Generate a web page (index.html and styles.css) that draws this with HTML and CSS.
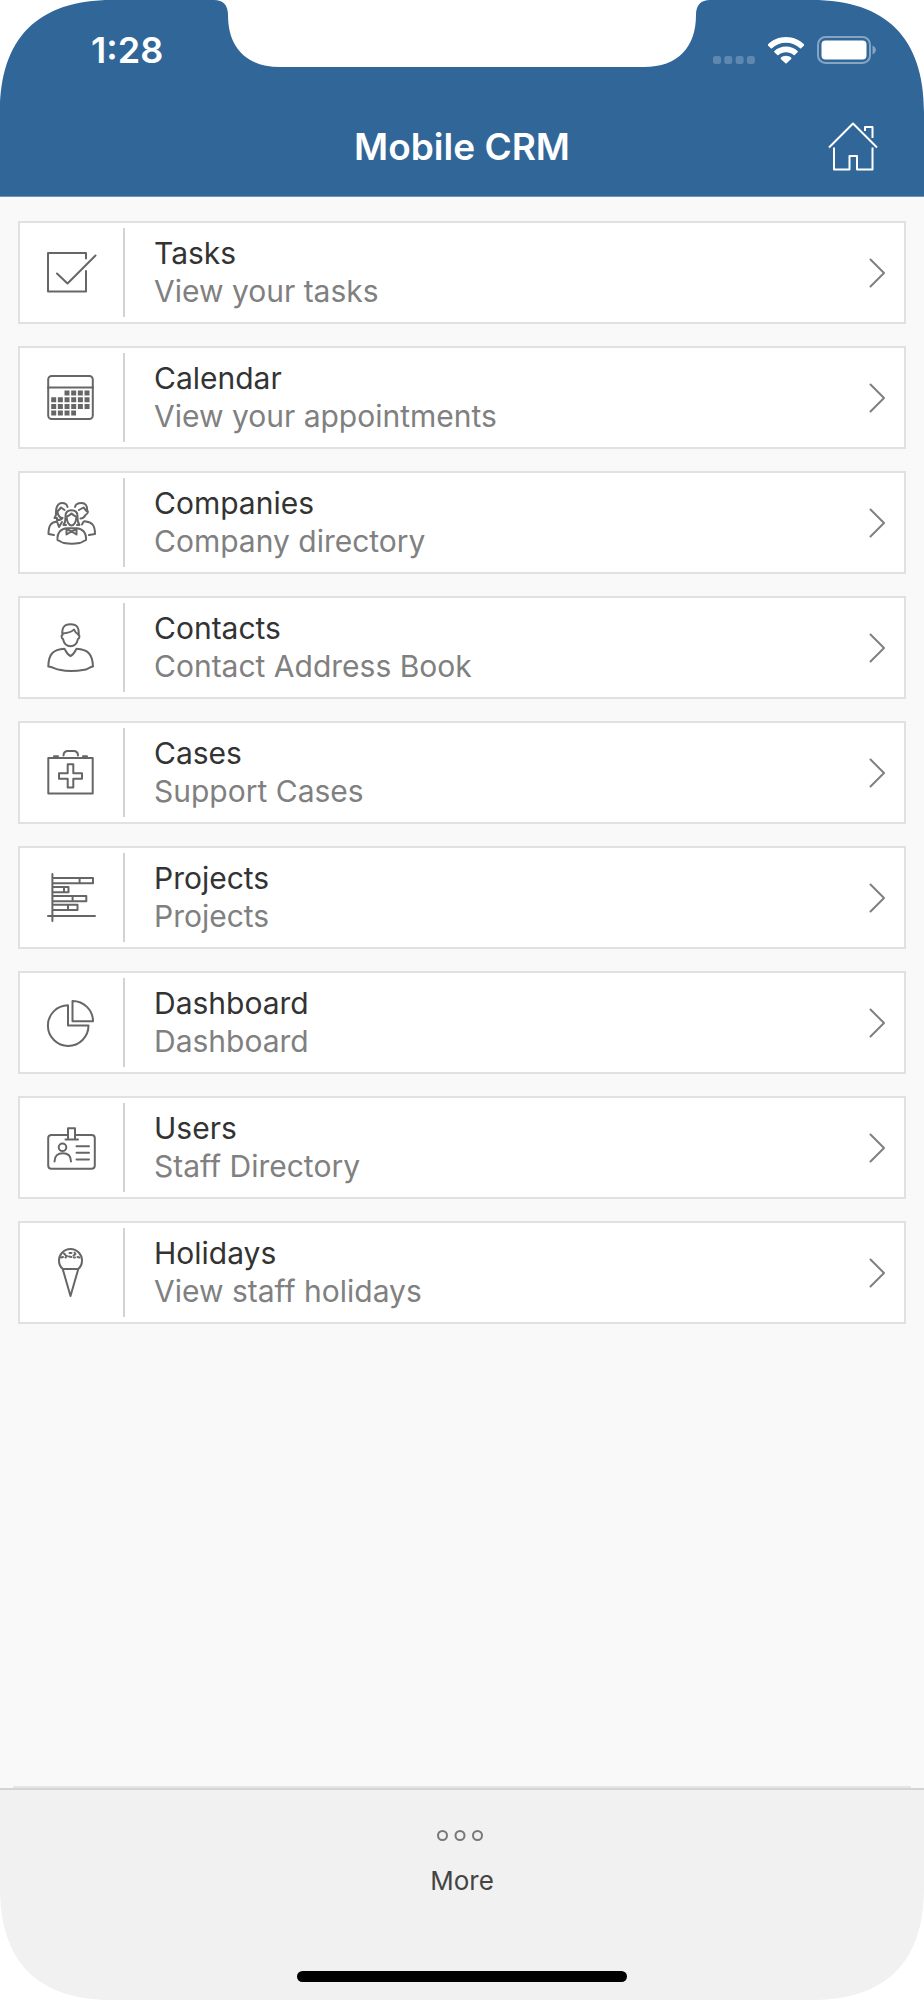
FILE: index.html
```html
<!DOCTYPE html>
<html lang="en">
<head>
<meta charset="utf-8">
<meta name="viewport" content="width=device-width, initial-scale=1">
<title>Mobile CRM</title>
<link rel="stylesheet" href="styles.css">
</head>
<body>
<div class="screen">
  <header class="header">
    <div class="status">
      <div class="status-left"><time class="clock">1:28</time></div>
      <svg class="notch" viewBox="0 0 496 67" width="496" height="67" aria-hidden="true"><path d="M0 0C9 0 14 5 14 15C14 47 32 67 66 67H430C464 67 482 47 482 15C482 5 487 0 496 0Z"/></svg>
      <div class="status-right">
        <svg class="signal" viewBox="0 0 42 8" width="42" height="8" aria-hidden="true"><rect width="8" height="8" rx="2.500"/><rect x="11.300" width="8" height="8" rx="2.500"/><rect x="22.600" width="8" height="8" rx="2.500"/><rect x="33.900" width="8" height="8" rx="2.500"/></svg>
        <svg class="wifi" viewBox="0 0 36 27" width="36" height="27" aria-hidden="true"><path d="M18 0C25 0 31.500 2.800 36 7.300Q36.500 8 36 8.600L33.200 11.300Q32.600 11.700 32 11.200C28.300 7.700 23.500 5.700 18 5.700S7.700 7.700 4 11.200Q3.400 11.700 2.800 11.300L0 8.600Q-.5 8 0 7.300C4.500 2.800 11 0 18 0Z"/><path d="M18 9.500C22.500 9.500 26.500 11.200 29.600 14Q30.100 14.600 29.600 15.200L26.700 18Q26.100 18.500 25.500 18C23.400 16.200 20.900 15.200 18 15.200S12.600 16.200 10.500 18Q9.900 18.500 9.300 18L6.400 15.200Q5.900 14.600 6.400 14C9.500 11.200 13.500 9.500 18 9.500Z"/><path d="M18 18.800C20 18.800 21.800 19.500 23.200 20.700Q23.700 21.300 23.200 21.900L18.600 26.300Q18 26.800 17.400 26.300L12.800 21.900Q12.300 21.300 12.800 20.700C14.200 19.500 16 18.800 18 18.800Z"/></svg>
        <svg class="battery" viewBox="0 0 60 28" width="60" height="28" aria-hidden="true"><rect class="battery-case" x="1" y="1" width="52" height="26" rx="7.500"/><rect x="4.500" y="4.500" width="45" height="19" rx="4"/><path class="battery-tip" d="M55.500 9.500C60 11.500 60 16.500 55.500 18.500Z"/></svg>
      </div>
    </div>
    <div class="titlebar">
      <h1 class="title">Mobile CRM</h1>
      <button class="home" type="button" aria-label="Home">
        <svg viewBox="0 0 50 50" width="50" height="50" aria-hidden="true"><path d="M1 25.500L25 1.500L49 25.500M6 25.500V47.500H21.500V34H29V47.500H44.500V25.500M37 9V5H44.500V16"/></svg>
      </button>
    </div>
  </header>

  <main class="content">
    <ul class="menu">
      <li><a class="card" href="#tasks">
        <span class="card-icon"><svg viewBox="0 0 49 49"><path d="M39 10.500V5H1V43.500H39V23M10 25.500L20.500 35.500L48.500 7.500"/></svg></span>
        <span class="card-text"><span class="card-title">Tasks</span><span class="card-sub">View your tasks</span></span>
        <svg class="arrow" viewBox="0 0 16 30"><path d="M1.500 1.500L15 15L1.500 28.500"/></svg>
      </a></li>
      <li><a class="card" href="#calendar">
        <span class="card-icon"><svg viewBox="0 0 49 49"><rect x="1.200" y="3" width="44.600" height="43" rx="3.500"/><path d="M1 14.400H46"/><path class="days" d="M17.500 20H43.500M4.200 26.700H43.500M4.200 33.400H43.500M4.200 40H29"/></svg></span>
        <span class="card-text"><span class="card-title">Calendar</span><span class="card-sub">View your appointments</span></span>
        <svg class="arrow" viewBox="0 0 16 30"><path d="M1.500 1.500L15 15L1.500 28.500"/></svg>
      </a></li>
      <li><a class="card" href="#companies">
        <span class="card-icon"><svg viewBox="0 0 49 49"><path d="M10.500 42C10 34 14.500 30.500 20 30.200H29.500C35 30.500 39.500 34 39 42C36 43 35.500 44.500 32.500 45Q24.800 46.500 17 45C14 44.500 13.500 43 10.500 42Z"/><path d="M19 27H16.500C19 24 18.500 21 18.500 18C18.500 14 21 12.300 24.500 12.300S30.500 14 30.500 18C30.500 21 30 24 32.500 27H30"/><path d="M20 18.500C22 18 23 17 24.500 15.500C26 17 27 18 29 18.500M19.800 20C20 24 22 27.500 24.500 27.500S29 24 29.200 20"/><path d="M19.500 31V36.500L24.500 33.500L29.500 36.500V31L24.500 33.500Z"/><path d="M9 17C8.500 9 11 5 15 5C18.500 5 20 6.500 20.500 9M9 17L7.500 20H10V22C13 22 15 21 15.500 20M10 14L14 9.500L17.500 12M10.500 14C11 17 12.500 19.500 15 20"/><path d="M28 9C28.500 6.500 31 5 34.500 5C38.500 5 40.500 8 40 12C42 14 40 16 38.500 17C37.500 19 36 20.500 33.500 20.500M32 12L36.500 9.500L39.500 13"/><path d="M7 37L1.500 36C1.500 27 4 24.500 10 23.500L12 29L15 24M42 37L48 36C48 27 45 24.500 39 23.500C37 22.500 36 24 35 26.500"/></svg></span>
        <span class="card-text"><span class="card-title">Companies</span><span class="card-sub">Company directory</span></span>
        <svg class="arrow" viewBox="0 0 16 30"><path d="M1.500 1.500L15 15L1.500 28.500"/></svg>
      </a></li>
      <li><a class="card" href="#contacts">
        <span class="card-icon"><svg viewBox="0 0 49 49"><path d="M15.500 12C14.500 5 17 1.200 23.500 1.200S32.500 5 31.500 12C33 12 32.500 15.500 31 16C30 20.500 27 23.300 23.500 23.300S17 20.500 16 16C14.500 15.500 14 12 15.500 12Z"/><path d="M16 10.500C21 10 25 9 27 6.500C28 9 29.500 10.500 31.500 11.500"/><path d="M17.500 25.800C19 28 20 32 23.500 33C27 32 28 28 29.500 25.800C41 26.500 45.500 31 46 43.500C43 43.800 40 46.500 37.500 46.800Q23.500 49.300 12.500 46.800C9 46.500 6 44 1.300 43.500C1.500 31 6 26.500 17.500 25.800Z"/></svg></span>
        <span class="card-text"><span class="card-title">Contacts</span><span class="card-sub">Contact Address Book</span></span>
        <svg class="arrow" viewBox="0 0 16 30"><path d="M1.500 1.500L15 15L1.500 28.500"/></svg>
      </a></li>
      <li><a class="card" href="#cases">
        <span class="card-icon"><svg viewBox="0 0 49 49"><path d="M1.300 10H45.700V45.500H1.300ZM16.500 7.500C16.500 4.500 18.500 3 21 3H26.500C29 3 31 4.500 31 7.500M7 8.300H11M36 8.300H40M20.700 16.300H26.300V25.200H35V30.800H26.300V39.500H20.700V30.800H12V25.200H20.700Z"/></svg></span>
        <span class="card-text"><span class="card-title">Cases</span><span class="card-sub">Support Cases</span></span>
        <svg class="arrow" viewBox="0 0 16 30"><path d="M1.500 1.500L15 15L1.500 28.500"/></svg>
      </a></li>
      <li><a class="card" href="#projects">
        <span class="card-icon"><svg viewBox="0 0 49 49"><path d="M5.400 1V48M1 43H48M6 5H46V10.300H6M32.600 5V10.300M6 14H21.500V19.300H6M17 14V19.300M6 22.900H39.300V28.200H6M25.600 22.900V28.200M6 31.800H30.500V37.100H6M21 31.800V37.100"/></svg></span>
        <span class="card-text"><span class="card-title">Projects</span><span class="card-sub">Projects</span></span>
        <svg class="arrow" viewBox="0 0 16 30"><path d="M1.500 1.500L15 15L1.500 28.500"/></svg>
      </a></li>
      <li><a class="card" href="#dashboard">
        <span class="card-icon"><svg viewBox="0 0 49 49"><path d="M21 7.300V27.600H41.500A20.300 20.300 0 1 1 21 7.300ZM25.500 3V23.300H46A20.400 20.400 0 0 0 25.500 3Z"/></svg></span>
        <span class="card-text"><span class="card-title">Dashboard</span><span class="card-sub">Dashboard</span></span>
        <svg class="arrow" viewBox="0 0 16 30"><path d="M1.500 1.500L15 15L1.500 28.500"/></svg>
      </a></li>
      <li><a class="card" href="#users">
        <span class="card-icon"><svg viewBox="0 0 49 49"><path d="M21 12H4.500Q1.200 12 1.200 15V42.500Q1.200 45.700 4.500 45.700H44.500Q47.800 45.700 47.800 42.500V15Q47.800 12 44.500 12H28M21 16.300V5.300H28V16.300M18.500 16.500H31M7.500 38.500C7.500 33 11 30.300 15.800 30.300S24 33 24 38.500M29.500 23.200H42M29.500 29.800H42M29.500 36.500H42"/><circle cx="15.500" cy="24.300" r="3.800"/></svg></span>
        <span class="card-text"><span class="card-title">Users</span><span class="card-sub">Staff Directory</span></span>
        <svg class="arrow" viewBox="0 0 16 30"><path d="M1.500 1.500L15 15L1.500 28.500"/></svg>
      </a></li>
      <li><a class="card" href="#holidays">
        <span class="card-icon"><svg viewBox="0 0 49 49"><path d="M15.700 21A11.500 11.500 0 1 1 31.300 21ZM15.700 21L23.500 48L31.300 21"/><path class="sprinkles" d="M14 9.500L16 9M17 5.500L18.500 7M18.500 9.500L20 8M22.500 5H24.500M22 8.500L24.500 9M27.500 4.500L28.500 6M26.500 7.500L28 6.500M30.500 9L32.500 9.500M27 9.500H28"/></svg></span>
        <span class="card-text"><span class="card-title">Holidays</span><span class="card-sub">View staff holidays</span></span>
        <svg class="arrow" viewBox="0 0 16 30"><path d="M1.500 1.500L15 15L1.500 28.500"/></svg>
      </a></li>
    </ul>
    <hr class="content-end">
  </main>

  <footer class="footer">
    <button class="more" type="button">
      <svg viewBox="0 0 50 11" width="50" height="11" aria-hidden="true"><circle cx="5.500" cy="5.500" r="4.500"/><circle cx="23" cy="5.500" r="4.500"/><circle cx="40.500" cy="5.500" r="4.500"/></svg>
      <span>More</span>
    </button>
    <div class="home-indicator"></div>
  </footer>

  <svg class="corner top-left" viewBox="0 0 112 112" aria-hidden="true"><path d="M0 0V112C0 38 38 0 112 0Z"/></svg>
  <svg class="corner top-right" viewBox="0 0 112 112" aria-hidden="true"><path d="M112 0V112C112 38 74 0 0 0Z"/></svg>
  <svg class="corner bottom-left" viewBox="0 0 112 112" aria-hidden="true"><path d="M0 112V0C0 74 38 112 112 112Z"/></svg>
  <svg class="corner bottom-right" viewBox="0 0 112 112" aria-hidden="true"><path d="M112 112V0C112 74 74 112 0 112Z"/></svg>
</div>
</body>
</html>
```
FILE: styles.css
```css
*, *::before, *::after {
  box-sizing: border-box;
}

body {
  margin: 0;
  background: #fff;
  font-family: Inter, "Liberation Sans", sans-serif;
}

button {
  padding: 0;
  border: 0;
  background: none;
  font: inherit;
  color: inherit;
}

.screen {
  position: relative;
  display: flex;
  flex-direction: column;
  min-height: 100vh;
  background: #f9f9f9;
}

/* Header */
.header {
  background: #316698;
  border-bottom: 1px solid #6d93b7;
  color: #fff;
}

.status {
  display: grid;
  grid-template-columns: 1fr auto 1fr;
  height: 100px;
}

.status-left,
.status-right {
  display: flex;
  align-items: center;
  height: 100px;
}

.status-left {
  padding-left: 91px;
}

.clock {
  font-size: 36px;
  font-weight: 600;
  line-height: 40px;
}

.notch {
  display: block;
  fill: #fff;
}

.status-right {
  justify-content: flex-end;
  gap: 13px;
  padding-right: 47px;
  fill: #fff;
}

.signal {
  margin-top: 19px;
  fill: #5e88b0;
}

.battery-case {
  fill: none;
  stroke: #86a5c3;
  stroke-width: 2;
}

.battery-tip {
  fill: #86a5c3;
}

.titlebar {
  display: grid;
  grid-template-columns: 1fr auto 1fr;
  align-items: center;
  height: 96px;
  padding: 0 46px 2px;
}

.title {
  grid-column: 2;
  margin: 0;
  font-size: 37px;
  font-weight: 600;
  line-height: 44px;
}

.home {
  justify-self: end;
  height: 50px;
}

.home svg {
  display: block;
  fill: none;
  stroke: #fff;
  stroke-width: 2;
  stroke-linejoin: round;
}

/* Menu */
.content {
  display: flex;
  flex: 1;
  flex-direction: column;
  justify-content: space-between;
}

.menu {
  display: flex;
  flex-direction: column;
  gap: 22px;
  margin: 0;
  padding: 24px 18px;
  list-style: none;
}

.card {
  display: flex;
  align-items: center;
  height: 103px;
  padding: 5px 19px 5px 0;
  border: 2px solid #e1e1e1;
  background: #fff;
  text-decoration: none;
}

.card-icon {
  display: flex;
  align-items: center;
  justify-content: center;
  align-self: stretch;
  width: 105px;
  border-right: 2px solid #d3d3d3;
}

.card-icon svg {
  width: 49px;
  height: 49px;
  overflow: visible;
  fill: none;
  stroke: #666;
  stroke-width: 2;
  stroke-linejoin: round;
  stroke-linecap: round;
}

.card-icon .days {
  stroke-width: 5;
  stroke-linecap: butt;
  stroke-dasharray: 5 1.67;
}

.card-text {
  display: flex;
  flex: 1;
  flex-direction: column;
  padding: 0 0 2px 29px;
  font-size: 30px;
  line-height: 38px;
}

.card-title {
  color: #333;
}

.card-sub {
  color: #808080;
}

.arrow {
  width: 16px;
  height: 30px;
  fill: none;
  stroke: #808080;
  stroke-width: 2;
  stroke-linecap: round;
  stroke-linejoin: round;
}

.content-end {
  height: 2px;
  margin: 0 13px;
  border: 0;
  background: #e6e6e6;
}

/* Footer */
.footer {
  display: flex;
  flex-direction: column;
  align-items: center;
  justify-content: space-between;
  height: 212px;
  padding: 40px 0 18px;
  border-top: 2px solid #d4d4d4;
  background: #f1f1f1;
}

.more {
  display: flex;
  flex-direction: column;
  align-items: center;
  gap: 24px;
  color: #444;
  font-size: 26px;
  line-height: 32px;
}

.more svg {
  fill: none;
  stroke: #777;
  stroke-width: 2;
}

.home-indicator {
  width: 330px;
  height: 11px;
  border-radius: 6px;
  background: #000;
}

/* Rounded device corners */
.corner {
  position: absolute;
  width: 112px;
  height: 112px;
  fill: #fff;
  pointer-events: none;
}

.top-left {
  top: 0;
  left: 0;
}

.top-right {
  top: 0;
  right: 0;
}

.bottom-left {
  bottom: 0;
  left: 0;
}

.bottom-right {
  right: 0;
  bottom: 0;
}
```
